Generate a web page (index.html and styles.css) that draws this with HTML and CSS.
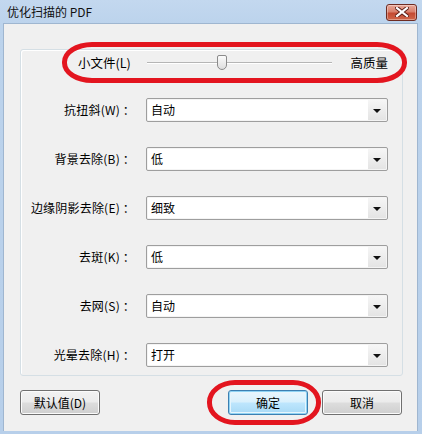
FILE: index.html
```html
<!DOCTYPE html>
<html lang="zh-CN">
<head>
<meta charset="utf-8">
<title>优化扫描的 PDF</title>
<link rel="stylesheet" href="styles.css">
</head>
<body>
<div class="window">
  <div class="titlebar">
    <span class="title">优化扫描的 PDF</span>
    <button class="close" aria-label="关闭">
      <svg width="14" height="10" viewBox="0 0 14 10">
        <path d="M2 1 L12 9 M12 1 L2 9" stroke="#5a1e16" stroke-width="4" stroke-linecap="square"/>
        <path d="M2 1 L12 9 M12 1 L2 9" stroke="#ffffff" stroke-width="2.2" stroke-linecap="square"/>
      </svg>
    </button>
  </div>
  <div class="client">
    <div class="group">
      <div class="slider-row">
        <span class="slider-lo">小文件(L)</span>
        <div class="track"><div class="thumb"></div></div>
        <span class="slider-hi">高质量</span>
      </div>
      <div class="fields">
        <label class="lbl">抗扭斜(W) ：</label>
        <div class="combo"><span class="val">自动</span><span class="drop"><i class="arrow"></i></span></div>
        <label class="lbl">背景去除(B) ：</label>
        <div class="combo"><span class="val">低</span><span class="drop"><i class="arrow"></i></span></div>
        <label class="lbl">边缘阴影去除(E) ：</label>
        <div class="combo"><span class="val">细致</span><span class="drop"><i class="arrow"></i></span></div>
        <label class="lbl">去斑(K) ：</label>
        <div class="combo"><span class="val">低</span><span class="drop"><i class="arrow"></i></span></div>
        <label class="lbl">去网(S) ：</label>
        <div class="combo"><span class="val">自动</span><span class="drop"><i class="arrow"></i></span></div>
        <label class="lbl">光晕去除(H) ：</label>
        <div class="combo"><span class="val">打开</span><span class="drop"><i class="arrow"></i></span></div>
      </div>
    </div>
    <div class="buttons">
      <button class="btn">默认值(D)</button>
      <span class="spacer"></span>
      <button class="btn btn-default">确定</button>
      <button class="btn">取消</button>
    </div>
  </div>
  <div class="mark mark-top"></div>
  <div class="mark mark-ok"></div>
</div>
</body>
</html>
```
FILE: styles.css
```css
html, body {
  margin: 0;
  padding: 0;
  background: #ffffff;
}
body {
  font-family: "Noto Sans CJK SC", "Noto Sans", "Liberation Sans", sans-serif;
  font-size: 12px;
  color: #000;
}
.window {
  position: relative;
  width: 422px;
  height: 434px;
  box-sizing: border-box;
  background: linear-gradient(180deg, #c3d8ef 0px, #bcd3ec 24px, #b7cfea 100%);
  padding: 0 4px 3px 3px;
  display: flex;
  flex-direction: column;
}
.titlebar {
  height: 23px;
  display: flex;
  align-items: center;
  padding-left: 4px;
  flex: none;
}
.title {
  font-size: 12px;
  color: #111;
  line-height: 16px;
}
.close {
  margin-left: auto;
  margin-right: 1px;
  margin-top: 1px;
  width: 31px;
  height: 17px;
  padding: 0;
  border: 1px solid #6e2c22;
  border-radius: 3px;
  background: linear-gradient(180deg, #e9a898 0%, #d9806c 45%, #c44a32 55%, #d0674a 100%);
  display: flex;
  align-items: center;
  justify-content: center;
  box-shadow: inset 0 0 0 1px rgba(255,255,255,0.35);
}
.client {
  flex: 1;
  background: #f0f0f0;
  border: 1px solid #9fb6d0;
  border-bottom: none;
  box-sizing: border-box;
  padding: 25px 14px 0 16px;
  display: flex;
  flex-direction: column;
}
.group {
  border: 1px solid #d5dfe5;
  border-radius: 3px;
  box-shadow: inset 1px 1px 0 #ffffff;
  padding: 0 0 9px 0;
  height: 327px;
  box-sizing: border-box;
}
.slider-row {
  height: 23px;
  display: flex;
  align-items: center;
  padding-left: 57px;
  padding-right: 14px;
  padding-top: 1px;
}
.slider-lo {
  width: 50px;
  white-space: nowrap;
  font-size: 12.5px;
}
.track {
  position: relative;
  margin-left: 19px;
  width: 185px;
  height: 1px;
  background: #b5b5b5;
  box-shadow: 0 1px 0 #ffffff;
}
.thumb {
  position: absolute;
  left: 70px;
  top: -7px;
  width: 8px;
  height: 13px;
  border: 1px solid #8b8b8b;
  border-radius: 2px 2px 5px 5px;
  background: linear-gradient(180deg, #fbfbfb, #dedede);
}
.slider-hi {
  margin-left: auto;
  font-size: 12.5px;
  white-space: nowrap;
}
.fields {
  display: grid;
  grid-template-columns: 114px 242px;
  column-gap: 11px;
  row-gap: 25px;
  margin-top: 24px;
  align-items: center;
}
.lbl {
  text-align: right;
  white-space: nowrap;
  font-size: 12px;
  line-height: 24px;
  letter-spacing: 0.2px;
}
.combo {
  height: 24px;
  box-sizing: border-box;
  border: 1px solid #9e9e9e;
  border-radius: 2px;
  background: #ffffff;
  display: flex;
  align-items: center;
  box-shadow: inset 0 0 0 1px #f4f4f4;
}
.val {
  flex: 1;
  padding-left: 4px;
  line-height: 20px;
}
.drop {
  width: 18px;
  height: 20px;
  margin-right: 1px;
  background: linear-gradient(180deg, #f6f6f6, #e4e4e4);
  display: flex;
  align-items: center;
  justify-content: center;
}
.arrow {
  display: block;
  width: 0;
  height: 0;
  border-left: 4px solid transparent;
  border-right: 4px solid transparent;
  border-top: 4px solid #111;
  margin-top: 1px;
}
.buttons {
  display: flex;
  margin-top: 14px;
  gap: 14px;
  padding-right: 1px;
}
.spacer {
  flex: 1;
}
.btn {
  width: 80px;
  height: 25px;
  font-family: inherit;
  font-size: 12px;
  color: #000;
  border: 1px solid #707070;
  border-radius: 3px;
  background: linear-gradient(180deg, #f2f2f2 0%, #ebebeb 49%, #dddddd 51%, #cfcfcf 100%);
  box-shadow: inset 0 0 0 1px #fbfbfb;
  padding: 0;
}
.btn-default {
  border-color: #3c7fb1;
  background: linear-gradient(180deg, #eaf6fd 0%, #d9f0fc 49%, #bee6fd 51%, #a7d9f5 100%);
  box-shadow: inset 0 0 0 1px #8fd3f4, inset 0 0 0 2px #e6f5fc;
}
.mark {
  position: absolute;
  border: 5px solid #e3151f;
  box-sizing: border-box;
  pointer-events: none;
}
.mark-top {
  left: 62px;
  top: 42px;
  width: 345px;
  height: 41px;
  border-radius: 30px / 20px;
}
.mark-ok {
  left: 207px;
  top: 380px;
  width: 114px;
  height: 45px;
  border-radius: 28px / 22px;
}
```
